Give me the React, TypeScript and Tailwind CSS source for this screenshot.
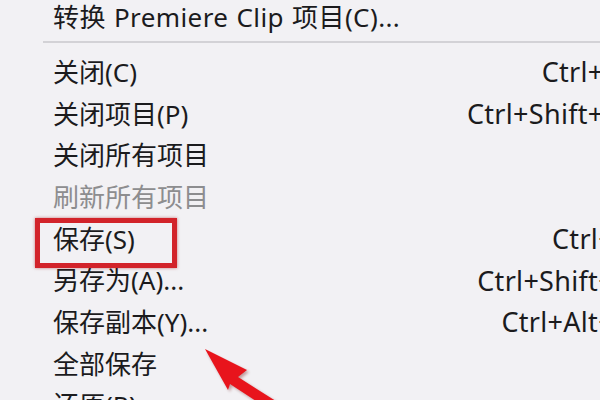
import React from "react";

type Item = { label: string; shortcut?: string; disabled?: boolean };

const items: Item[] = [
  { label: "关闭(C)", shortcut: "Ctrl+W" },
  { label: "关闭项目(P)", shortcut: "Ctrl+Shift+W" },
  { label: "关闭所有项目" },
  { label: "刷新所有项目", disabled: true },
  { label: "保存(S)", shortcut: "Ctrl+S" },
  { label: "另存为(A)...", shortcut: "Ctrl+Shift+S" },
  { label: "保存副本(Y)...", shortcut: "Ctrl+Alt+S" },
  { label: "全部保存" },
  { label: "还原(R)" },
];

function MenuRow({ item }: { item: Item }) {
  return (
    <div
      className={`flex h-[41.7px] items-center justify-between pl-[53px] pr-[4px] ${
        item.disabled ? "text-[#8d8d8f]" : "text-[#1b1b1d]"
      }`}
    >
      <span>{item.label}</span>
      {item.shortcut && <span className="text-[27px] tracking-[0.3px]">{item.shortcut}</span>}
    </div>
  );
}

export default function App() {
  return (
    <main className="relative h-[400px] w-[600px] overflow-hidden bg-[#f2f1f4] font-['Noto_Sans','Noto_Sans_CJK_SC',sans-serif] text-[26px] leading-none">
      <div className="w-[633px]">
        <div className="flex h-[34px] items-center pl-[53px] tracking-[0.4px] [word-spacing:1px] text-[#1b1b1d]">
          转换 Premiere Clip 项目(C)...
        </div>
        <div className="flex h-[17px] items-start pl-[43px] pt-[7px]">
          <div className="h-[2px] flex-1 bg-[#d3d2d6]" />
        </div>
        {items.map((item) => (
          <MenuRow key={item.label} item={item} />
        ))}
      </div>

      {/* red highlight box */}
      <div className="pointer-events-none absolute left-[35px] top-[218px] h-[50px] w-[142px] border-[5px] border-[#d2232a] shadow-[0_0_3px_rgba(160,0,0,0.5)]" />

      {/* arrow */}
      <svg className="pointer-events-none absolute left-0 top-0" width="600" height="400" viewBox="0 0 600 400">
        <defs>
          <filter id="blur" x="-20%" y="-20%" width="140%" height="140%">
            <feGaussianBlur stdDeviation="1.5" />
          </filter>
        </defs>
        <g filter="url(#blur)" opacity="0.35">
          <polygon points="207,352 249,372 240,379 292,412 284,420 232,386 230,392" fill="#600" />
        </g>
        <polygon points="205,349 247,370 238,377 290,410 282,418 230,384 228,390" fill="#e8141c" />
      </svg>
    </main>
  );
}
